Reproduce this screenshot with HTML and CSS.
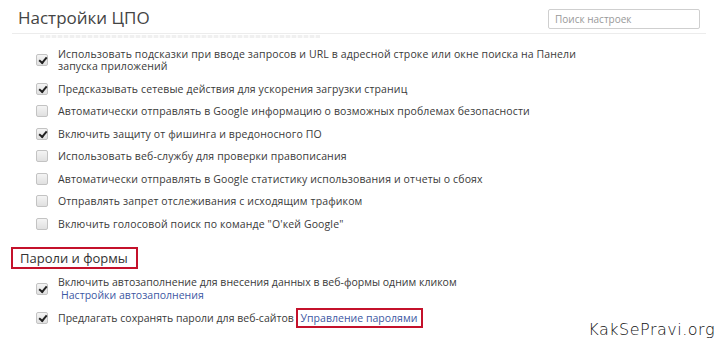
FILE: index.html
```html
<!DOCTYPE html>
<html lang="ru">
<head>
<meta charset="utf-8">
<link rel="stylesheet" href="styles.css">
</head>
<body>
<div class="page">
  <header class="head">
    <h1 class="title">Настройки ЦПО</h1>
    <div class="search">Поиск настроек</div>
  </header>
  <div class="ghost"></div>
  <div class="list">
    <div class="row"><span class="cb on"></span><span class="txt">Использовать подсказки при вводе запросов и URL в адресной строке или окне поиска на Панели<br>запуска приложений</span></div>
    <div class="row"><span class="cb on"></span><span class="txt">Предсказывать сетевые действия для ускорения загрузки страниц</span></div>
    <div class="row"><span class="cb"></span><span class="txt">Автоматически отправлять в Google информацию о возможных проблемах безопасности</span></div>
    <div class="row"><span class="cb on"></span><span class="txt">Включить защиту от фишинга и вредоносного ПО</span></div>
    <div class="row"><span class="cb"></span><span class="txt">Использовать веб-службу для проверки правописания</span></div>
    <div class="row"><span class="cb"></span><span class="txt">Автоматически отправлять в Google статистику использования и отчеты о сбоях</span></div>
    <div class="row"><span class="cb"></span><span class="txt">Отправлять запрет отслеживания с исходящим трафиком</span></div>
    <div class="row"><span class="cb"></span><span class="txt">Включить голосовой поиск по команде "О'кей Google"</span></div>
  </div>
  <div class="section"><span class="sec-title mark">Пароли и формы</span></div>
  <div class="list list2">
    <div class="row"><span class="cb on"></span><span class="txt">Включить автозаполнение для внесения данных в веб-формы одним кликом<br><a class="link sub">Настройки автозаполнения</a></span></div>
    <div class="row"><span class="cb on"></span><span class="txt">Предлагать сохранять пароли для веб-сайтов <a class="link mark boxed">Управление паролями</a></span></div>
  </div>
  <div class="wm">KakSePravi.org</div>
</div>
</body>
</html>
```
FILE: styles.css
```css
html, body { margin: 0; padding: 0; background: #fff; }
.page {
  width: 720px; height: 340px; overflow: hidden; position: relative;
  font-family: "Open Sans", "DejaVu Sans", sans-serif; color: #3a3a3a;
}
.head {
  display: flex; justify-content: space-between; align-items: flex-start;
  height: 33px; margin: 0 14px 0 12px; padding: 0 7px 0 6px;
  border-bottom: 1px solid #ececec;
}
.title {
  margin: 7px 0 0 0; font-size: 17px; line-height: 22px; font-weight: 400; color: #444; letter-spacing: 0;
}
.search {
  margin-top: 9px; margin-right: -1px; width: 152px; height: 20px; box-sizing: border-box;
  border: 1px solid #cfcfcf; border-radius: 2px; padding: 2px 0 0 6px;
  font-size: 10px; color: #999; line-height: 14px;
}
.ghost {
  height: 3px; margin: 1px 0 0 40px; width: 280px;
  background: repeating-linear-gradient(90deg, #e6e6e6 0 4px, #f6f6f6 4px 6px);
  opacity: 0.6;
}
.list { padding-left: 36px; margin-top: 10px; }
.row {
  display: flex; align-items: center; gap: 10px;
  font-size: 10.5px; line-height: 12px; margin-bottom: 10.5px; letter-spacing: 0.13px;
}
.cb {
  flex: none; width: 10px; height: 10px;
  border: 1px solid #c3c3c3; border-radius: 2px;
  background: linear-gradient(#f4f4f4, #e0e0e0);
  position: relative;
}
.cb.on::after {
  content: ""; position: absolute; left: 2px; top: 2px;
  width: 6px; height: 3px;
  border-left: 2px solid #222; border-bottom: 2px solid #222;
  transform: rotate(-50deg); transform-origin: center;
}
.section { margin: 16px 0 0 11px; }
.sec-title {
  display: inline-block; font-size: 13px; line-height: 16px; color: #333; padding: 1px 8px 1px 7px;
}
.mark { border: 2px solid #c4112b; }
.list2 { margin-top: 7px; }
.list2 .row { margin-bottom: 10px; line-height: 13px; letter-spacing: 0.02px; }
.link { color: #3d58a3; text-decoration: none; }
.sub { margin-left: 3px; }
.boxed { padding: 1px 4px 1px 3px; margin-left: -1px; }
.wm {
  position: absolute; right: 5px; bottom: 1px;
  font-family: "DejaVu Sans", sans-serif; font-size: 16px; color: #111; letter-spacing: 0.5px;
  font-weight: 300;
}
```
